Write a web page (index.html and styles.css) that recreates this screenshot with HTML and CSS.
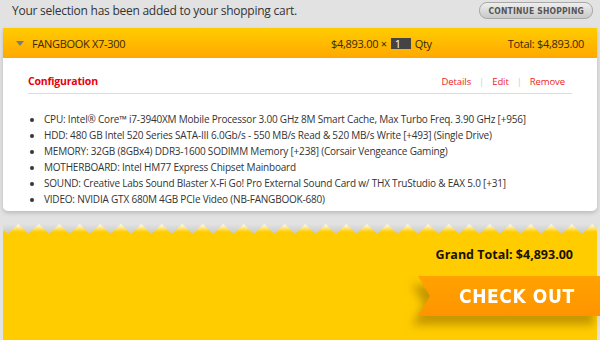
FILE: index.html
```html
<!DOCTYPE html>
<html lang="en">
<head>
    <meta charset="UTF-8">
    <title>Shopping Cart</title>
    <link rel="stylesheet" href="styles.css">
</head>
<body>
    <div class="topbar">
        <p class="added">Your selection has been added to your shopping cart.</p>
        <a class="continue" href="#">CONTINUE SHOPPING</a>
    </div>

    <div class="cart-item">
        <div class="item-head">
            <span class="toggle"></span>
            <span class="item-name">FANGBOOK X7-300</span>
            <span class="price">$4,893.00 &times;</span>
            <span class="qty-box">1</span>
            <span class="qty-label">Qty</span>
            <span class="item-total">Total: $4,893.00</span>
        </div>
        <div class="item-body">
            <div class="config-head">
                <h3>Configuration</h3>
                <div class="actions">
                    <a href="#">Details</a>
                    <span class="sep">|</span>
                    <a href="#">Edit</a>
                    <span class="sep">|</span>
                    <a href="#">Remove</a>
                </div>
            </div>
            <ul class="config-list">
                <li>CPU: Intel&reg; Core&trade; i7-3940XM Mobile Processor 3.00 GHz 8M Smart Cache, Max Turbo Freq. 3.90 GHz [+956]</li>
                <li>HDD: 480 GB Intel 520 Series SATA-III 6.0Gb/s - 550 MB/s Read &amp; 520 MB/s Write [+493] (Single Drive)</li>
                <li>MEMORY: 32GB (8GBx4) DDR3-1600 SODIMM Memory [+238] (Corsair Vengeance Gaming)</li>
                <li>MOTHERBOARD: Intel HM77 Express Chipset Mainboard</li>
                <li>SOUND: Creative Labs Sound Blaster X-Fi Go! Pro External Sound Card w/ THX TruStudio &amp; EAX 5.0 [+31]</li>
                <li>VIDEO: NVIDIA GTX 680M 4GB PCIe Video (NB-FANGBOOK-680)</li>
            </ul>
        </div>
    </div>

    <div class="checkout-area">
        <!-- torn edge -->
        <svg class="teeth" width="100%" height="10">
            <defs>
                <linearGradient id="tooth" x1="0" y1="0" x2="0" y2="1">
                    <stop offset="0" stop-color="#ffffff"/>
                    <stop offset="0.8" stop-color="#ffcc00"/>
                </linearGradient>
                <pattern id="zig" width="20.5" height="10" patternUnits="userSpaceOnUse" x="5">
                    <polygon points="0,10 10.25,0 20.5,10" fill="url(#tooth)"/>
                </pattern>
            </defs>
            <rect width="100%" height="10" fill="url(#zig)"/>
        </svg>
        <div class="checkout-body">
            <p class="grand-total">Grand Total: $4,893.00</p>
            <div class="ribbon-wrap">
                <a class="ribbon" href="#">CHECK OUT</a>
            </div>
        </div>
    </div>
</body>
</html>
```

FILE: styles.css
```css
body {
    margin: 0;
    background: #e2e2e2;
    font-family: "Open Sans", "Noto Sans", sans-serif;
    color: #333;
    overflow: hidden;
}
a {
    text-decoration: none;
}
.topbar {
    display: flex;
    justify-content: space-between;
    align-items: flex-start;
    height: 28px;
    padding: 0 7px 0 12px;
}
.added {
    margin: 2px 0 0;
    font-size: 12px;
    letter-spacing: -0.25px;
    color: #333;
}
.continue {
    margin-top: 2px;
    padding: 1px 8px 0;
    height: 14px;
    line-height: 14px;
    border: 1px solid #a8a8a8;
    border-radius: 8px;
    background: linear-gradient(#eeeeee, #c9c9c9);
    font-family: "DejaVu Sans Condensed", "Liberation Sans Narrow", sans-serif;
    font-weight: bold;
    font-size: 8.5px;
    letter-spacing: 0.2px;
    color: #555;
}
.cart-item {
    margin: 0 3px;
    box-shadow: 0 2px 4px rgba(0,0,0,0.18);
    border-radius: 0 0 5px 5px;
}
/* yellow header */
.item-head {
    display: flex;
    align-items: center;
    height: 30px;
    padding: 0 13px;
    background: linear-gradient(#ffcc00, #ffa800);
    font-size: 11px;
    letter-spacing: -0.3px;
    color: #3a2800;
}
.toggle {
    width: 0;
    height: 0;
    border-left: 4px solid transparent;
    border-right: 4px solid transparent;
    border-top: 5px solid #7a7a7a;
    margin-right: 8px;
}
.item-name {
    flex: 1;
}
.qty-box {
    display: inline-block;
    width: 16px;
    height: 11px;
    line-height: 11px;
    margin: 0 4px;
    padding-left: 4px;
    background: #444;
    color: #fff;
    font-size: 11px;
}
.item-total {
    margin-left: 76px;
}
.item-body {
    background: #fff;
    border-radius: 0 0 5px 5px;
    padding: 16px 25px 4px 25px;
}
.config-head {
    display: flex;
    justify-content: space-between;
    align-items: center;
    padding: 0 0 5px 0;
    margin: 0 0 17px;
    border-bottom: 1px solid #dcdcdc;
}
.config-head h3 {
    margin: 0;
    font-size: 10.5px;
    letter-spacing: -0.2px;
    color: #e8000b;
}
.actions {
    display: flex;
    gap: 8px;
    padding-right: 7px;
    font-size: 9.5px;
    letter-spacing: -0.1px;
}
.actions a {
    color: #ee1c25;
}
.actions .sep {
    color: #ccc;
}
.config-list {
    margin: 0;
    padding-left: 16px;
    font-size: 10px;
    letter-spacing: -0.2px;
    line-height: 16px;
}
/* bottom area */
.checkout-area {
    margin: 13px 3px 0;
}
.teeth {
    display: block;
    background: linear-gradient(#e2e2e2, #c8c8c8);
}
.checkout-body {
    display: flex;
    flex-direction: column;
    align-items: flex-end;
    height: 110px;
    background: #ffcc00;
}
.grand-total {
    margin: 12px 24px 0 0;
    font-weight: bold;
    font-size: 12.5px;
    color: #1a1200;
}
.ribbon-wrap {
    margin: 13px -3px 0 0;
    filter: drop-shadow(-6px 9px 4px rgba(150,110,0,0.55));
}
.ribbon {
    display: block;
    width: 141px;
    height: 40px;
    line-height: 40px;
    padding-left: 41px;
    background: linear-gradient(#ffa200, #ff9400);
    clip-path: polygon(0 0, 100% 0, 100% 100%, 0 100%, 12px 50%);
    font-family: "DejaVu Sans Condensed", "Liberation Sans Narrow", sans-serif;
    font-weight: bold;
    font-size: 19px;
    letter-spacing: 0.6px;
    color: #fff;
}
```
